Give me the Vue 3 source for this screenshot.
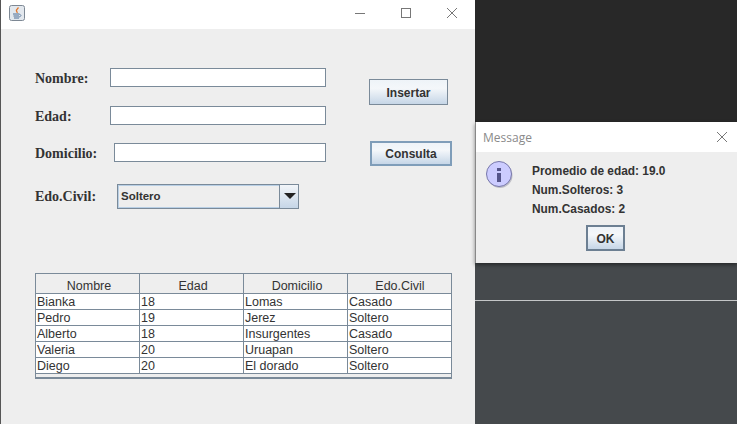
<template>
  <div class="desktop">
    <section class="main-window">
      <header class="titlebar">
        <svg class="java-icon" width="16" height="16" viewBox="0 0 16 16">
          <rect x="0.5" y="0.5" width="15" height="15" rx="2" fill="#e3e8ee" stroke="#7d8894" />
          <path d="M9.5 2.5C8 4 7 4.8 7.5 6C7.8 6.8 8.5 7 8 8" fill="none" stroke="#e2762a" stroke-width="1.3" />
          <path d="M4 9h6.5M4.5 11h5.5M5 13h5" stroke="#4f6f95" stroke-width="1" />
          <path d="M10.5 9.5c2 0 2 2-.5 2.5" fill="none" stroke="#4f6f95" stroke-width="0.8" />
        </svg>
        <div class="window-controls">
          <svg width="12" height="12" viewBox="0 0 12 12"><path d="M1 6.5h10" stroke="#777" /></svg>
          <svg width="12" height="12" viewBox="0 0 12 12"><rect x="1.5" y="1.5" width="9" height="9" fill="none" stroke="#777" /></svg>
          <svg width="12" height="12" viewBox="0 0 12 12"><path d="M1 1l10 10M11 1L1 11" stroke="#777" /></svg>
        </div>
      </header>

      <div class="content">
        <div class="form-top">
          <div class="fields">
            <div class="field-row nombre">
              <label>Nombre:</label>
              <div class="text-field"></div>
            </div>
            <div class="field-row edad">
              <label>Edad:</label>
              <div class="text-field"></div>
            </div>
            <div class="field-row domicilio">
              <label>Domicilio:</label>
              <div class="text-field"></div>
            </div>
          </div>
          <div class="actions">
            <button class="metal-btn insertar">Insertar</button>
            <button class="metal-btn consulta">Consulta</button>
          </div>
        </div>

        <div class="field-row civil">
          <label>Edo.Civil:</label>
          <div class="combo">
            <span class="combo-value">Soltero</span>
            <span class="combo-arrow"></span>
          </div>
        </div>

        <div class="table-wrap">
          <table>
            <thead>
              <tr>
                <th v-for="col in columns" :key="col">{{ col }}</th>
              </tr>
            </thead>
            <tbody>
              <tr v-for="row in rows" :key="row[0]">
                <td v-for="cell in row" :key="cell">{{ cell }}</td>
              </tr>
            </tbody>
          </table>
        </div>
      </div>
    </section>

    <div class="backdrop">
      <div class="backdrop-top"></div>
      <div class="backdrop-bottom"></div>
    </div>

    <section class="dialog">
      <header class="dialog-title">
        <span>Message</span>
        <svg width="12" height="12" viewBox="0 0 12 12"><path d="M1 1l10 10M11 1L1 11" stroke="#777" /></svg>
      </header>
      <div class="dialog-body">
        <svg class="info-icon" width="28" height="30" viewBox="0 0 28 30">
          <circle cx="14" cy="15.5" r="12.5" fill="#8f8f9f" opacity="0.5" />
          <circle cx="13" cy="14" r="12.5" fill="#ccccff" stroke="#7777aa" />
          <rect x="11" y="8" width="4" height="3" fill="#55558a" />
          <rect x="11" y="13" width="4" height="9" fill="#55558a" />
        </svg>
        <div class="message">
          <p>Promedio de edad: 19.0</p>
          <p>Num.Solteros: 3</p>
          <p>Num.Casados: 2</p>
        </div>
      </div>
      <button class="metal-btn ok">OK</button>
    </section>
  </div>
</template>

<script setup>
const columns = ['Nombre', 'Edad', 'Domicilio', 'Edo.Civil']

const rows = [
  ['Bianka', '18', 'Lomas', 'Casado'],
  ['Pedro', '19', 'Jerez', 'Soltero'],
  ['Alberto', '18', 'Insurgentes', 'Casado'],
  ['Valeria', '20', 'Uruapan', 'Soltero'],
  ['Diego', '20', 'El dorado', 'Soltero']
]
</script>

<style>
html,
body {
  margin: 0;
  overflow: hidden;
}
</style>

<style scoped>
.desktop {
  position: relative;
  display: flex;
  width: 737px;
  height: 424px;
  overflow: hidden;
  font-family: "Liberation Sans", Arial, sans-serif;
}

.main-window {
  width: 474px;
  border-left: 1px solid #555;
  display: flex;
  flex-direction: column;
  background: #eeeeee;
}

.titlebar {
  height: 29px;
  flex: none;
  background: #fff;
  display: flex;
  align-items: center;
  justify-content: space-between;
  padding: 0 17px 0 8px;
}

.java-icon {
  margin-top: -3px;
}

.window-controls {
  display: flex;
  gap: 34px;
  margin-top: -3px;
}

.content {
  padding: 39px 0 0 34px;
}

.form-top {
  display: flex;
}

.fields {
  width: 291px;
}

.field-row {
  display: flex;
  align-items: center;
}

.field-row label {
  padding-top: 2px;
  font-family: "Liberation Serif", "Times New Roman", serif;
  font-weight: 700;
  font-size: 14px;
  color: #333;
}

.nombre,
.edad,
.domicilio {
  height: 19px;
}

.nombre label,
.edad label {
  width: 75px;
}

.domicilio label {
  width: 79px;
}

.edad {
  margin-top: 19px;
}

.domicilio {
  margin-top: 18px;
}

.text-field {
  flex: 1;
  height: 17px;
  background: #fff;
  border: 1px solid #7a8a99;
}

.actions {
  display: flex;
  flex-direction: column;
  align-items: flex-start;
  padding: 11px 0 0 43px;
}

.metal-btn {
  display: block;
  padding: 1px 0 0;
  box-sizing: border-box;
  border: 1px solid #7a8a99;
  background: linear-gradient(#eef3f8 0%, #f4f7fa 35%, #c6d6e7 100%);
  font-family: "Liberation Sans", Arial, sans-serif;
  font-weight: 700;
  font-size: 12px;
  color: #333;
}

.insertar {
  width: 79px;
  height: 26px;
}

.consulta {
  width: 82px;
  height: 25px;
  margin: 36px 0 0 1px;
  border: 2px solid #7f9db9;
  outline: none;
}

.civil {
  margin-top: 18px;
}

.civil label {
  width: 82px;
  padding-top: 0;
}

.combo {
  width: 182px;
  height: 25px;
  box-sizing: border-box;
  display: flex;
  border: 1px solid #7a8a99;
  background: #eeeeee;
  box-shadow: inset 0 0 0 1px #b8cfe5;
}

.combo-value {
  flex: 1;
  padding-left: 3px;
  line-height: 23px;
  font-weight: 700;
  font-size: 11.5px;
  color: #333;
}

.combo-arrow {
  position: relative;
  width: 18px;
  border-left: 1px solid #7a8a99;
  background: linear-gradient(#f2f5f9, #c6d6e7);
}

.combo-arrow::after {
  content: "";
  position: absolute;
  left: 4px;
  top: 8px;
  border-left: 6px solid transparent;
  border-right: 6px solid transparent;
  border-top: 6px solid #222;
}

.table-wrap {
  width: 415px;
  height: 103px;
  margin-top: 64px;
  border: 1px solid #7a8a99;
  border-bottom-width: 2px;
  background: #eeeeee;
}

table {
  width: 415px;
  table-layout: fixed;
  border-collapse: separate;
  border-spacing: 0;
  font-size: 12.5px;
  color: #333;
}

th {
  width: 100px;
  height: 15px;
  padding: 4px 0 0 3px;
  font-weight: 400;
  text-align: center;
  background: #eeeeee;
  border-right: 1px solid #7a8a99;
  border-bottom: 1px solid #7a8a99;
}

td {
  height: 13px;
  padding: 2px 0 0 1px;
  line-height: 13px;
  background: #fff;
  border-right: 1px solid #7a8a99;
  border-bottom: 1px solid #7a8a99;
}

th:last-child {
  width: auto;
  padding-left: 1px;
  border-right: 0;
}

td:last-child {
  border-right: 0;
}

.backdrop {
  flex: 1;
  display: flex;
  flex-direction: column;
  box-shadow: inset 3px 0 3px -2px #222;
}

.backdrop-top {
  height: 140px;
  background: #282828;
}

.backdrop-bottom {
  flex: 1;
  background: #45494c;
  background-image: linear-gradient(#c4c6c7, #c4c6c7);
  background-size: 100% 1px;
  background-position: 0 160px;
  background-repeat: no-repeat;
}

/* dialog floats over the other windows */
.dialog {
  position: absolute;
  left: 475px;
  top: 122px;
  width: 262px;
  height: 141px;
  box-sizing: border-box;
  background: #eeeeee;
  border-left: 1px solid #888;
  box-shadow: 0 2px 4px rgba(0, 0, 0, 0.45);
}

.dialog-title {
  height: 30px;
  background: #fff;
  display: flex;
  align-items: center;
  justify-content: space-between;
  padding: 0 9px 0 7px;
  font-family: "Open Sans", "Noto Sans", sans-serif;
  font-size: 12px;
  color: #8a8a8a;
}

.dialog-body {
  display: flex;
  padding: 8px 0 0 10px;
}

.info-icon {
  flex: none;
}

.message {
  margin-left: 18px;
  padding-top: 2px;
}

.message p {
  margin: 0;
  height: 19px;
  line-height: 19px;
  font-weight: 700;
  font-size: 11.9px;
  color: #333;
}

.ok {
  width: 39px;
  height: 26px;
  margin: 6px 0 0 110px;
  border: 2px solid #6c7f92;
}
</style>
